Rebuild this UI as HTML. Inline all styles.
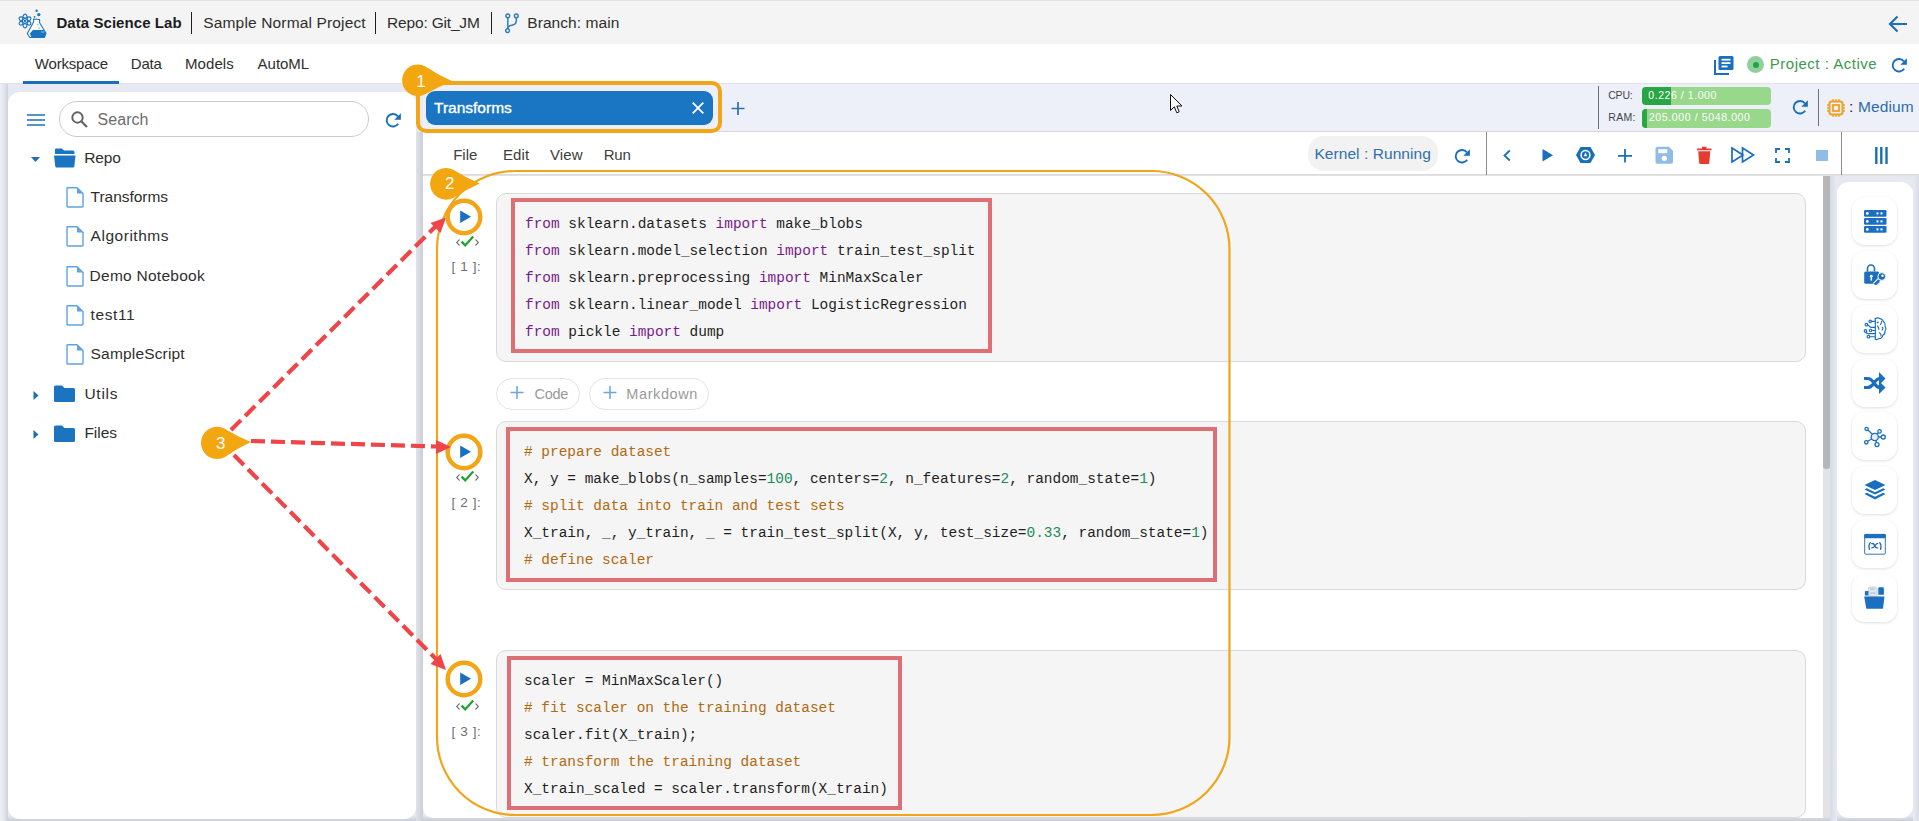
<!DOCTYPE html>
<html><head><meta charset="utf-8">
<style>
*{box-sizing:border-box;margin:0;padding:0}
html,body{width:1919px;height:821px;overflow:hidden;background:#e6e9f1;font-family:"Liberation Sans",sans-serif;color:#333}
.a{position:absolute}
.t{position:absolute;white-space:pre;line-height:1}
svg{position:absolute;overflow:visible}
#hdr{left:0;top:0;width:1919px;height:44px;background:#f4f4f4;border-top:1px solid #e4e4e4}
#nav{left:0;top:44px;width:1919px;height:40px;background:#fff;border-bottom:1px solid #dfe2ea}
#leftcard{left:8px;top:92px;width:408px;height:727px;background:#fff;border-radius:12px}
#gapstrip{left:416px;top:132px;width:7px;height:689px;background:linear-gradient(90deg,#dfe2e9,#cbced7)}
#leftshadow{left:0;top:84px;width:8px;height:737px;background:linear-gradient(90deg,#eef0f5,#e3e6ee 50%,#cdd0d9)}
#tabbar{left:423px;top:84px;width:1496px;height:48px;background:#edf0f8;border-bottom:1px solid #d6d8de}
#toolbar{left:423px;top:132px;width:1496px;height:43px;background:#fff}
#tbline{left:423px;top:174px;width:1496px;height:5px;background:linear-gradient(180deg,#d2d2d2,rgba(230,230,230,.5) 40%,rgba(255,255,255,0))}
#nb{left:423px;top:176px;width:1407px;height:642px;background:#fff;border-bottom-left-radius:10px}
#sbtrack{left:1823px;top:176px;width:7px;height:642px;background:#e2e2e2}
#sbthumb{left:1823px;top:176px;width:7px;height:293px;background:#b6b6b6;border-radius:0 0 3px 3px}
#sidebar{left:1837px;top:182px;width:76px;height:636px;background:#fff;border-radius:12px}
.code{position:absolute;font-family:"Liberation Mono",monospace;font-size:14.45px;line-height:27px;white-space:pre;color:#1e1e1e}
.kw{color:#751b8b}
.cm{color:#b06a10}
.nu{color:#1a8a5c}
.cell{position:absolute;left:496px;width:1310px;background:#f5f5f5;border:1px solid #d9d9d9;border-radius:10px}
.redbox{position:absolute;border:4px solid #de6f74}
.sbtn{position:absolute;left:1852px;width:45px;height:48px;background:#fff;border-radius:13px;box-shadow:0 1px 3px rgba(0,0,0,.13)}
.pill{position:absolute;height:32px;border:1px solid #e3e3e3;border-radius:16px;background:#fff}
</style></head><body>

<svg width="0" height="0" style="position:absolute"><defs><symbol id="refr" viewBox="0 0 18 17"><path d="M14.2 11.8 A6.3 6.3 0 1 1 13.9 4.3" fill="none" stroke="#1a6fb8" stroke-width="1.9"/><path d="M16.9 1.2 V7.7 H10.3 Z" fill="#1a6fb8"/></symbol></defs></svg>
<div id="hdr" class="a"></div>
<div id="nav" class="a"></div>
<div class="a" style="left:0;top:816px;width:1919px;height:5px;background:linear-gradient(180deg,#e3e6ed,#c9ccd4)"></div>
<div id="leftshadow" class="a"></div>
<div id="leftcard" class="a"></div>
<div id="gapstrip" class="a"></div>
<div id="tabbar" class="a"></div>
<div id="toolbar" class="a"></div>
<div id="tbline" class="a"></div>
<div id="nb" class="a"></div>
<div id="sbtrack" class="a"></div>
<div id="sbthumb" class="a"></div>
<div class="a" style="left:1830px;top:176px;width:7px;height:645px;background:linear-gradient(90deg,#d6dae4,#e8ebf3)"></div>
<div class="a" style="left:1913px;top:176px;width:6px;height:645px;background:linear-gradient(90deg,#e8ebf3,#d9dce5)"></div>
<div id="sidebar" class="a"></div>

<!-- ============ HEADER ============ -->
<!-- logo -->
<svg style="left:14px;top:6px" width="36" height="36" viewBox="14 6 36 36">
 <g fill="none" stroke="#1a74c0" stroke-width="1.1">
  <ellipse cx="25" cy="21" rx="6.9" ry="2.4" transform="rotate(90 25 21)"/>
  <ellipse cx="25" cy="21" rx="6.6" ry="2.4" transform="rotate(30 25 21)"/>
  <ellipse cx="25" cy="21" rx="6.6" ry="2.4" transform="rotate(-30 25 21)"/>
 </g>
 <circle cx="25" cy="21" r="1.2" fill="#1a74c0"/>
 <circle cx="36.6" cy="10.8" r="1.2" fill="#1a74c0"/>
 <circle cx="38.8" cy="14.6" r="1.7" fill="#1a74c0"/>
 <circle cx="34.6" cy="16.8" r="0.9" fill="#1a74c0"/>
 <path d="M33.6 19 L39.6 19.5 L39.6 22.8 L46 33.3 L44.3 37.5 L29.8 37.5 L27.3 33.5 L33.6 22 Z" fill="#fff" stroke="#1a74c0" stroke-width="1.1" stroke-linejoin="round"/>
 <path d="M33 29.9 L43.5 29.9 L46 33.3 L44.3 37.5 L31.5 37.5 L29.8 33.5 Z" fill="#1a74c0"/>
 <path d="M36.8 24.9 H38.6 M38.3 28.1 H40.3" stroke="#7aa7d0" stroke-width="0.9"/>
 <path d="M41 32 H44.3" stroke="#8ab8e0" stroke-width="1"/>
</svg>
<div class="t" id="t_dsl" style="left:56.40px;top:15.10px;font-size:15px;font-weight:700;color:#1d1d1d;letter-spacing:0.067px">Data Science Lab</div>
<div class="a" style="left:190.8px;top:12px;width:1.6px;height:22px;background:#1f1f1f"></div>
<div class="t" id="t_snp" style="left:203.30px;top:15.10px;font-size:15.5px;color:#2e2e2e;letter-spacing:0.150px">Sample Normal Project</div>
<div class="a" style="left:374.8px;top:12px;width:1.6px;height:22px;background:#1f1f1f"></div>
<div class="t" id="t_repo" style="left:387.10px;top:15.10px;font-size:15.5px;color:#2e2e2e;letter-spacing:-0.182px">Repo: Git_JM</div>
<div class="a" style="left:490.5px;top:12px;width:1.6px;height:22px;background:#1f1f1f"></div>
<svg style="left:504px;top:13px" width="16" height="21" viewBox="0 0 16 21">
 <g fill="none" stroke="#2a7bc0" stroke-width="1.45">
  <circle cx="3.8" cy="2.8" r="1.9"/><circle cx="12.3" cy="2.8" r="1.9"/><circle cx="3.6" cy="17.6" r="1.9"/>
  <path d="M3.8 4.7 V15.7 M12.3 4.7 V7.5 Q12.3 11.5 8 12.2 Q4 12.8 3.7 15.5"/>
 </g>
</svg>
<div class="t" id="t_branch" style="left:527.30px;top:15.10px;font-size:15.5px;color:#2e2e2e;letter-spacing:0.064px">Branch: main</div>
<svg style="left:1888px;top:15px" width="20" height="18" viewBox="0 0 20 18">
 <path d="M19 9 H2.5 M9.5 1.5 L2 9 L9.5 16.5" fill="none" stroke="#1f6fb5" stroke-width="2.2"/>
</svg>

<!-- ============ NAV ============ -->
<div class="t" id="t_ws" style="left:34.85px;top:55.80px;font-size:15px;color:#2e2e2e;letter-spacing:-0.194px">Workspace</div>
<div class="a" style="left:23px;top:81px;width:96px;height:3px;background:#1a6fb8"></div>
<div class="t" id="t_data" style="left:130.80px;top:55.80px;font-size:15px;color:#2e2e2e;letter-spacing:-0.200px">Data</div>
<div class="t" id="t_models" style="left:185.00px;top:55.80px;font-size:15px;color:#2e2e2e;letter-spacing:0.080px">Models</div>
<div class="t" id="t_automl" style="left:257.60px;top:55.80px;font-size:15px;color:#2e2e2e;letter-spacing:-0.020px">AutoML</div>

<!-- project status -->
<svg style="left:1714px;top:56px" width="20" height="19" viewBox="0 0 20 19">
 <rect x="4.5" y="0" width="15" height="14" rx="1.5" fill="#1a6fc0"/>
 <path d="M1 4 V18 H15" fill="none" stroke="#1a6fc0" stroke-width="2"/>
 <rect x="7.5" y="2.8" width="9" height="1.8" fill="#fff"/>
 <rect x="7.5" y="6.2" width="9" height="1.8" fill="#fff"/>
 <rect x="7.5" y="9.6" width="6" height="1.8" fill="#fff"/>
</svg>
<div class="a" style="left:1747px;top:56px;width:17px;height:17px;border-radius:50%;background:#8fd09c"></div>
<div class="a" style="left:1752.5px;top:61.5px;width:6px;height:6px;border-radius:50%;background:#25a244"></div>
<div class="t" id="t_proj" style="left:1769.80px;top:55.50px;font-size:15px;color:#3b9a4e;letter-spacing:0.507px">Project : Active</div>
<svg style="left:1889.5px;top:57px" width="18" height="17" viewBox="0 0 18 17"><use href="#refr"/></svg>

<!-- ============ LEFT PANEL ============ -->
<svg style="left:27px;top:114px" width="18" height="12" viewBox="0 0 18 12">
 <g stroke="#1f6fb5" stroke-width="1.7"><path d="M0 1 H18 M0 6 H18 M0 11 H18"/></g>
</svg>
<div class="a" style="left:59px;top:101px;width:310px;height:36px;border:1px solid #cbcbcb;border-radius:18px"></div>
<svg style="left:71px;top:111px" width="17" height="17" viewBox="0 0 17 17">
 <circle cx="6.5" cy="6.5" r="5.2" fill="none" stroke="#616161" stroke-width="1.9"/>
 <path d="M10.5 10.5 L16 16" stroke="#616161" stroke-width="2.2"/>
</svg>
<div class="t" id="t_search" style="left:97.50px;top:112.20px;font-size:16px;color:#6d6d6d;letter-spacing:0.060px">Search</div>
<svg style="left:384px;top:112px" width="18" height="17" viewBox="0 0 18 17"><use href="#refr"/></svg>

<!-- tree -->
<svg style="left:31px;top:157px" width="10" height="6" viewBox="0 0 10 6"><path d="M0 0 H9 L4.5 5 Z" fill="#1a6fb8"/></svg>
<svg style="left:54px;top:148px" width="22" height="20" viewBox="0 0 22 20">
 <path d="M1.5 0.5 H8 L10 2.5 H19 Q20.5 2.5 20.5 4 V6 H1 V2 Q1 0.5 1.5 0.5 Z" fill="#1a74c0"/>
 <path d="M0 7.5 H21.5 L20.3 18.5 Q20 19.5 19 19.5 H2.5 Q1.5 19.5 1.3 18.5 Z" fill="#1a74c0"/>
</svg>
<div class="t" id="t_repo2" style="left:84.20px;top:150.10px;font-size:15.5px;color:#2e2e2e;letter-spacing:-0.100px">Repo</div>

<svg style="left:66px;top:187px" width="18" height="21" viewBox="0 0 18 21" class="fileic"><path d="M1 1.5 Q1 0.8 1.7 0.8 H11 L17 6.5 V19.3 Q17 20 16.3 20 H1.7 Q1 20 1 19.3 Z" fill="#fff" stroke="#5fa3e0" stroke-width="1.4"/><path d="M11 0.8 V6.5 H17 Z" fill="#5fa3e0"/></svg>
<div class="t" id="t_f1" style="left:90.60px;top:189.00px;font-size:15.5px;color:#2e2e2e;letter-spacing:-0.033px">Transforms</div>
<svg style="left:66px;top:226px" width="18" height="21" viewBox="0 0 18 21"><path d="M1 1.5 Q1 0.8 1.7 0.8 H11 L17 6.5 V19.3 Q17 20 16.3 20 H1.7 Q1 20 1 19.3 Z" fill="#fff" stroke="#5fa3e0" stroke-width="1.4"/><path d="M11 0.8 V6.5 H17 Z" fill="#5fa3e0"/></svg>
<div class="t" id="t_f2" style="left:90.60px;top:227.90px;font-size:15.5px;color:#2e2e2e;letter-spacing:0.522px">Algorithms</div>
<svg style="left:66px;top:266px" width="18" height="21" viewBox="0 0 18 21"><path d="M1 1.5 Q1 0.8 1.7 0.8 H11 L17 6.5 V19.3 Q17 20 16.3 20 H1.7 Q1 20 1 19.3 Z" fill="#fff" stroke="#5fa3e0" stroke-width="1.4"/><path d="M11 0.8 V6.5 H17 Z" fill="#5fa3e0"/></svg>
<div class="t" id="t_f3" style="left:89.60px;top:268.00px;font-size:15.5px;color:#2e2e2e;letter-spacing:0.258px">Demo Notebook</div>
<svg style="left:66px;top:305px" width="18" height="21" viewBox="0 0 18 21"><path d="M1 1.5 Q1 0.8 1.7 0.8 H11 L17 6.5 V19.3 Q17 20 16.3 20 H1.7 Q1 20 1 19.3 Z" fill="#fff" stroke="#5fa3e0" stroke-width="1.4"/><path d="M11 0.8 V6.5 H17 Z" fill="#5fa3e0"/></svg>
<div class="t" id="t_f4" style="left:90.60px;top:307.00px;font-size:15.5px;color:#2e2e2e;letter-spacing:0.580px">test11</div>
<svg style="left:66px;top:344px" width="18" height="21" viewBox="0 0 18 21"><path d="M1 1.5 Q1 0.8 1.7 0.8 H11 L17 6.5 V19.3 Q17 20 16.3 20 H1.7 Q1 20 1 19.3 Z" fill="#fff" stroke="#5fa3e0" stroke-width="1.4"/><path d="M11 0.8 V6.5 H17 Z" fill="#5fa3e0"/></svg>
<div class="t" id="t_f5" style="left:90.60px;top:346.40px;font-size:15.5px;color:#2e2e2e;letter-spacing:0.173px">SampleScript</div>

<svg style="left:33px;top:391px" width="6" height="10" viewBox="0 0 6 10"><path d="M0.5 0 V9 L5.5 4.5 Z" fill="#1a6fb8"/></svg>
<svg style="left:54px;top:385px" width="22" height="18" viewBox="0 0 22 18">
 <path d="M0 2 Q0 0.5 1.5 0.5 H8 L10.5 3 H19.5 Q21 3 21 4.5 V15.5 Q21 17 19.5 17 H1.5 Q0 17 0 15.5 Z" fill="#1a74c0"/>
</svg>
<div class="t" id="t_utils" style="left:84.40px;top:386.00px;font-size:15.5px;color:#2e2e2e;letter-spacing:0.750px">Utils</div>
<svg style="left:33px;top:430px" width="6" height="10" viewBox="0 0 6 10"><path d="M0.5 0 V9 L5.5 4.5 Z" fill="#1a6fb8"/></svg>
<svg style="left:54px;top:425px" width="22" height="18" viewBox="0 0 22 18">
 <path d="M0 2 Q0 0.5 1.5 0.5 H8 L10.5 3 H19.5 Q21 3 21 4.5 V15.5 Q21 17 19.5 17 H1.5 Q0 17 0 15.5 Z" fill="#1a74c0"/>
</svg>
<div class="t" id="t_files" style="left:84.40px;top:424.70px;font-size:15.5px;color:#2e2e2e;letter-spacing:0.000px">Files</div>

<!-- ============ TAB BAR ============ -->
<div class="a" style="left:426px;top:91px;width:287px;height:34px;background:#1a76c2;border-radius:9px"></div>
<div class="t" id="t_tab" style="left:434.00px;top:100.00px;font-size:15.5px;color:#fff;letter-spacing:0.000px;-webkit-text-stroke:0.35px #fff">Transforms</div>
<svg style="left:692px;top:102px" width="12" height="12" viewBox="0 0 12 12"><path d="M0.7 0.7 L11.3 11.3 M11.3 0.7 L0.7 11.3" stroke="#fff" stroke-width="1.8"/></svg>
<svg style="left:731px;top:102px" width="14" height="14" viewBox="0 0 14 14"><path d="M7 0 V13 M0.5 6.5 H13.5" stroke="#2a6fb2" stroke-width="1.7"/></svg>

<!-- cpu/ram -->
<div class="a" style="left:1598px;top:86px;width:1px;height:43px;background:#707070"></div>
<div class="t" id="t_cpu" style="left:1608.20px;top:89.70px;font-size:10.5px;color:#444;letter-spacing:-0.167px">CPU:</div>
<div class="t" id="t_ram" style="left:1608.20px;top:111.75px;font-size:10.5px;color:#444;letter-spacing:0.367px">RAM:</div>
<div class="a" style="left:1642px;top:87px;width:129px;height:18px;background:#97d88b;border-radius:4px;overflow:hidden"><div class="a" style="left:0;top:0;width:29px;height:18px;background:#27a643"></div></div>
<div class="a" style="left:1642px;top:109px;width:129px;height:19px;background:#97d88b;border-radius:4px;overflow:hidden"><div class="a" style="left:0;top:0;width:5px;height:19px;background:#27a643"></div></div>
<div class="t" id="t_cpuv" style="left:1648.30px;top:89.70px;font-size:10.5px;color:#fff;letter-spacing:0.558px">0.226 / 1.000</div>
<div class="t" id="t_ramv" style="left:1648.90px;top:111.75px;font-size:10.5px;color:#fff;letter-spacing:0.618px">205.000 / 5048.000</div>
<svg style="left:1791.3px;top:99px" width="18" height="17" viewBox="0 0 18 17"><use href="#refr"/></svg>
<div class="a" style="left:1818px;top:89px;width:1px;height:37px;background:#707070"></div>
<svg style="left:1827px;top:99px" width="18" height="18" viewBox="0 0 18 18">
 <rect x="2.5" y="2.5" width="13" height="13" rx="2" fill="none" stroke="#f0a020" stroke-width="2"/>
 <rect x="6" y="6" width="6" height="6" fill="none" stroke="#f0a020" stroke-width="1.8"/>
 <g stroke="#f0a020" stroke-width="1.3"><path d="M6 0 V2 M9 0 V2 M12 0 V2 M6 16 V18 M9 16 V18 M12 16 V18 M0 6 H2 M0 9 H2 M0 12 H2 M16 6 H18 M16 9 H18 M16 12 H18"/></g>
</svg>
<div class="t" id="t_med" style="left:1849.00px;top:98.70px;font-size:15.5px;color:#2d6caa;letter-spacing:0.143px"><span style="color:#222">:</span> Medium</div>

<!-- ============ TOOLBAR ============ -->
<div class="t" id="t_file" style="left:453.20px;top:146.90px;font-size:15px;color:#3d3d3d;letter-spacing:0.000px">File</div>
<div class="t" id="t_edit" style="left:503.00px;top:146.90px;font-size:15px;color:#3d3d3d;letter-spacing:0.067px">Edit</div>
<div class="t" id="t_view" style="left:550.00px;top:146.90px;font-size:15px;color:#3d3d3d;letter-spacing:0.100px">View</div>
<div class="t" id="t_run" style="left:603.70px;top:146.90px;font-size:15px;color:#3d3d3d;letter-spacing:-0.150px">Run</div>
<div class="a" style="left:1308px;top:136px;width:130px;height:35px;background:#f2f2f2;border-radius:16px"></div>
<div class="t" id="t_kernel" style="left:1314.40px;top:146.00px;font-size:15.5px;color:#2f6fae;letter-spacing:0.067px">Kernel : Running</div>
<svg style="left:1453px;top:148px" width="18" height="17" viewBox="0 0 18 17"><use href="#refr"/></svg>
<div class="a" style="left:1486px;top:132px;width:1px;height:43px;background:#8c8c8c"></div>
<svg style="left:1503px;top:150px" width="8" height="11" viewBox="0 0 8 11"><path d="M6.8 0.5 L1.5 5.5 L6.8 10.5" fill="none" stroke="#1a6fb8" stroke-width="1.8"/></svg>
<svg style="left:1542px;top:149px" width="12" height="13" viewBox="0 0 12 13"><path d="M0.5 0 L11 6.3 L0.5 12.6 Z" fill="#1a6fb8"/></svg>
<svg style="left:1576px;top:147px" width="19" height="16" viewBox="0 0 19 16">
 <path d="M4.5 0 H14.5 L19 8 L14.5 16 H4.5 L0 8 Z" fill="#1a6fb8"/>
 <circle cx="9.5" cy="8" r="4.4" fill="none" stroke="#fff" stroke-width="1.5"/>
 <path d="M9.5 5.5 L11.3 9.3 H7.7 Z" fill="#fff"/>
</svg>
<svg style="left:1618px;top:149px" width="14" height="14" viewBox="0 0 14 14"><path d="M7 0 V13.5 M0 6.8 H14" stroke="#1a6fb8" stroke-width="1.8"/></svg>
<svg style="left:1655px;top:146px" width="19" height="19" viewBox="0 0 19 19">
 <path d="M0.5 2.5 Q0.5 0.8 2.3 0.8 H14 L18 4.8 V16 Q18 17.8 16.3 17.8 H2.3 Q0.5 17.8 0.5 16 Z" fill="#90bde5"/>
 <rect x="3.3" y="3.2" width="9" height="4" fill="#fff"/>
 <circle cx="9.3" cy="12.3" r="2.6" fill="#fff"/>
</svg>
<svg style="left:1697px;top:146px" width="15" height="19" viewBox="0 0 15 19">
 <path d="M0 2.5 H14.5 V4.2 H0 Z M5 0.8 H9.5 V2.5 H5 Z" fill="#e63c30"/>
 <path d="M1.2 5.2 H13.3 L12.3 17 Q12.2 18 11.2 18 H3.3 Q2.3 18 2.2 17 Z" fill="#e63c30"/>
</svg>
<svg style="left:1731px;top:147px" width="24" height="16" viewBox="0 0 24 16">
 <path d="M1 1 L12 8 L1 15 Z M11.5 1 L22.5 8 L11.5 15 Z" fill="none" stroke="#1a6fb8" stroke-width="1.7" stroke-linejoin="miter"/>
</svg>
<svg style="left:1775px;top:148px" width="15" height="15" viewBox="0 0 15 15">
 <path d="M1 5 V1 H5 M10 1 H14 V5 M14 10 V14 H10 M5 14 H1 V10" fill="none" stroke="#1a6fb8" stroke-width="1.8"/>
</svg>
<div class="a" style="left:1816px;top:150px;width:12px;height:11px;background:#8fbde3"></div>
<div class="a" style="left:1841px;top:132px;width:1px;height:43px;background:#8c8c8c"></div>
<svg style="left:1875px;top:147px" width="13" height="17" viewBox="0 0 13 17"><path d="M1.3 0 V17 M6.3 0 V17 M11.5 0 V17" stroke="#1a6fb8" stroke-width="2.4"/></svg>

<!-- ============ SIDEBAR ============ -->
<div class="sbtn" style="top:197px"></div>
<div class="sbtn" style="top:251px"></div>
<div class="sbtn" style="top:305px"></div>
<div class="sbtn" style="top:359px"></div>
<div class="sbtn" style="top:412px"></div>
<div class="sbtn" style="top:466px"></div>
<div class="sbtn" style="top:520px"></div>
<div class="sbtn" style="top:574px"></div>


<!-- sidebar icons -->
<svg style="left:1864px;top:210px" width="23" height="23" viewBox="0 0 23 23">
 <g fill="#1a6fc0"><rect x="0" y="0" width="22.5" height="6.8" rx="1.3"/><rect x="0" y="8" width="22.5" height="6.8" rx="1.3"/><rect x="0" y="16" width="22.5" height="6.8" rx="1.3"/></g>
 <g fill="#fff"><circle cx="3.3" cy="3.4" r="1.4"/><circle cx="3.3" cy="11.4" r="1.4"/><circle cx="3.3" cy="19.4" r="1.4"/>
 <rect x="12.5" y="2.4" width="2" height="2"/><rect x="16.5" y="2.4" width="2" height="2"/>
 <rect x="12.5" y="10.4" width="2" height="2"/><rect x="16.5" y="10.4" width="2" height="2"/>
 <rect x="12.5" y="18.4" width="2" height="2"/><rect x="16.5" y="18.4" width="2" height="2"/></g>
</svg>
<svg style="left:1864px;top:263px" width="22" height="23" viewBox="0 0 22 23">
 <path d="M3.5 8.5 V5.5 A3.5 3.5 0 0 1 10.5 5.5 V8.5" fill="none" stroke="#1a6fc0" stroke-width="1.6"/>
 <rect x="0.2" y="8.5" width="15" height="12.3" rx="1.6" fill="#1a6fc0"/>
 <circle cx="7.3" cy="13.2" r="1.4" fill="#fff"/><path d="M7.3 13.5 V17.6" stroke="#fff" stroke-width="1.5"/>
 <path d="M10.5 21.5 L16.5 15.5" stroke="#fff" stroke-width="4.2"/>
 <path d="M10.5 21.5 L16.5 15.5 M12 20 L13.5 21.3 M13.8 18.2 L15.3 19.5" stroke="#1a6fc0" stroke-width="1.9"/>
 <circle cx="17.8" cy="13.5" r="3.9" fill="#1a6fc0" stroke="#fff" stroke-width="1"/>
 <circle cx="18.5" cy="12.8" r="1.2" fill="#fff"/>
</svg>
<svg style="left:1860px;top:313px" width="30" height="30" viewBox="0 0 30 30">
 <g fill="none" stroke="#1a6fc0" stroke-width="1.15" stroke-linecap="round">
  <path d="M15.3 5.6 V26.2"/>
  <path d="M15.3 5.6 Q17.5 4.3 20 5.6 Q22.8 6 23.6 8.8 Q25.7 10.3 25.2 13.2 Q26.6 15.5 25 18 Q25.3 21 22.8 22.3 Q22 25.6 18.8 25.6 Q17 27.2 15.3 26.2"/>
  <path d="M17.2 9.8 L18.2 9 M17.5 13 Q19 14.5 18.8 16.2 M21.5 8.3 Q21.8 10.2 20.5 11.5 M22.2 14.2 Q23.6 15.5 22 17 M19.5 19.8 Q21.5 21 21 23"/>
  <path d="M11.2 8.4 H15.3 M7.5 12 Q9.5 12.8 10.5 14.3 H15.3 M11.8 17.5 H15.3 M5.8 19 Q6.4 20.6 8.2 20.6 H15.3 M9.6 23.7 H15.3"/>
  <circle cx="10.2" cy="8.4" r="1.25"/><circle cx="6.4" cy="11.7" r="1.3"/><circle cx="10.6" cy="17.5" r="1.25"/><circle cx="5.5" cy="17.9" r="1.3"/><circle cx="8.4" cy="23.7" r="1.3"/>
 </g>
</svg>
<svg style="left:1864px;top:371px" width="22" height="24" viewBox="0 0 22 24">
 <path d="M0 7.5 H3.5 Q7 7.5 10 12 Q13 16.5 16 16.5 H16.5 M0 16.5 H3.5 Q7 16.5 10 12 Q13 7.5 16 7.5 H16.5" fill="none" stroke="#1a6fc0" stroke-width="3.2"/>
 <path d="M15 1 L21.5 7.5 L15 14 Z M15 10 L21.5 16.5 L15 23 Z" fill="#1a6fc0"/>
</svg>
<svg style="left:1864px;top:427px" width="22" height="20" viewBox="0 0 22 20">
 <g stroke="#1a6fc0" stroke-width="1.3" fill="none">
  <path d="M11 10 L3.5 2.5 M11 10 L14.8 5.2 M11 10 L18.5 10 M11 10 L3.3 14.5 M11 10 L12.5 16"/>
 </g>
 <g stroke="#1a6fc0" stroke-width="1.3" fill="#e9eef6">
  <circle cx="10.8" cy="10" r="3.6"/>
 </g>
 <g stroke="#1a6fc0" stroke-width="1.3" fill="#fff">
  <circle cx="2.6" cy="1.9" r="1.6"/><circle cx="15.6" cy="4.4" r="1.7"/><circle cx="19.3" cy="10" r="2"/><circle cx="2.3" cy="15.3" r="1.7"/><circle cx="13" cy="17.6" r="2"/>
 </g>
</svg>
<svg style="left:1864px;top:480px" width="22" height="21" viewBox="0 0 22 21">
 <path d="M11 0 L21.5 5 L11 10 L0.5 5 Z" fill="#1a6fc0"/>
 <path d="M2.8 8.2 L11 12.3 L19.2 8.2 L21.5 9.5 L11 14.5 L0.5 9.5 Z" fill="#1a6fc0"/>
 <path d="M2.8 12.7 L11 16.8 L19.2 12.7 L21.5 14 L11 19.5 L0.5 14 Z" fill="#1a6fc0"/>
</svg>
<svg style="left:1860px;top:529px" width="30" height="30" viewBox="0 0 30 30">
 <rect x="4.7" y="5.4" width="20.6" height="19.8" rx="1" fill="none" stroke="#3a76b0" stroke-width="1"/>
 <path d="M4.2 6 Q4.2 4.9 5.3 4.9 H24.7 Q25.8 4.9 25.8 6 V9.3 H4.2 Z" fill="#1a6fc0"/>
 <g fill="none" stroke="#2a6aa8" stroke-width="1.3" stroke-linecap="round">
  <path d="M10.2 13.6 Q8.2 16.5 9.4 20.3"/>
  <path d="M19.8 13.6 Q21.8 16.5 20.6 20.3"/>
  <path d="M11.8 14.6 Q13.8 14.1 14.6 16.5 Q15.4 19.2 17.6 18.9"/>
  <path d="M17.8 14.4 Q16.3 14.6 15 16.8 Q13.8 19 11.8 18.9"/>
 </g>
</svg>
<svg style="left:1860px;top:582px" width="30" height="30" viewBox="0 0 30 30">
 <path d="M4.9 10 Q4.9 9.1 5.8 9.1 H9 V13.6 H4.9 Z" fill="#1a6fc0"/>
 <path d="M18.3 6.2 Q18.3 5.3 19.2 5.3 H23 Q23.9 5.3 23.9 6.2 V12.8 H18.3 Z" fill="#1a6fc0"/>
 <path d="M8.6 5 H15.5 L17.2 6.7 V14.6 H8.6 Z" fill="#dfe6ee" stroke="#b5c0cc" stroke-width="0.6"/>
 <path d="M10 7 H14.5 M10 11 H15.5" stroke="#9fb0c2" stroke-width="0.8"/>
 <path d="M4.2 14.5 H24.5 L23 26.3 Q22.9 26.8 22.3 26.8 H6.9 Q6.3 26.8 6.2 26.3 Z" fill="#1a6fc0"/>
</svg>

<!-- ============ CELLS ============ -->
<div class="cell" style="top:193px;height:169px"></div>
<div class="redbox" style="left:511px;top:198px;width:481px;height:155px"></div>
<div class="code" id="c1" style="left:525px;top:211px"><span class="kw">from</span> sklearn.datasets <span class="kw">import</span> make_blobs
<span class="kw">from</span> sklearn.model_selection <span class="kw">import</span> train_test_split
<span class="kw">from</span> sklearn.preprocessing <span class="kw">import</span> MinMaxScaler
<span class="kw">from</span> sklearn.linear_model <span class="kw">import</span> LogisticRegression
<span class="kw">from</span> pickle <span class="kw">import</span> dump</div>

<div class="pill" style="left:496px;top:378px;width:84px"></div>
<svg style="left:510px;top:386px" width="14" height="14" viewBox="0 0 14 14"><path d="M7 0 V13 M0.5 6.5 H13.5" stroke="#6ea6d8" stroke-width="1.5"/></svg>
<div class="t" id="t_code" style="left:534.60px;top:386.80px;font-size:14.5px;color:#9a9a9a;letter-spacing:-0.300px">Code</div>
<div class="pill" style="left:589px;top:378px;width:120px"></div>
<svg style="left:603px;top:386px" width="14" height="14" viewBox="0 0 14 14"><path d="M7 0 V13 M0.5 6.5 H13.5" stroke="#6ea6d8" stroke-width="1.5"/></svg>
<div class="t" id="t_md" style="left:626.30px;top:386.80px;font-size:14.5px;color:#9a9a9a;letter-spacing:0.600px">Markdown</div>

<div class="cell" style="top:421px;height:169px"></div>
<div class="redbox" style="left:506px;top:427px;width:711px;height:155px"></div>
<div class="code" id="c2" style="left:524px;top:439px"><span class="cm"># prepare dataset</span>
X, y = make_blobs(n_samples=<span class="nu">100</span>, centers=<span class="nu">2</span>, n_features=<span class="nu">2</span>, random_state=<span class="nu">1</span>)
<span class="cm"># split data into train and test sets</span>
X_train, _, y_train, _ = train_test_split(X, y, test_size=<span class="nu">0.33</span>, random_state=<span class="nu">1</span>)
<span class="cm"># define scaler</span></div>

<div class="cell" style="top:650px;height:168px"></div>
<div class="redbox" style="left:507px;top:656px;width:395px;height:154px"></div>
<div class="code" id="c3" style="left:524px;top:668px">scaler = MinMaxScaler()
<span class="cm"># fit scaler on the training dataset</span>
scaler.fit(X_train);
<span class="cm"># transform the training dataset</span>
X_train_scaled = scaler.transform(X_train)</div>

<!-- gutters -->
<div class="t" id="t_n1" style="left:451.5px;top:260.4px;font-size:13.5px;letter-spacing:0.6px;color:#6f6f6f">[ 1 ]:</div>
<div class="t" id="t_n2" style="left:451.5px;top:496px;font-size:13.5px;letter-spacing:0.6px;color:#6f6f6f">[ 2 ]:</div>
<div class="t" id="t_n3" style="left:451.5px;top:725px;font-size:13.5px;letter-spacing:0.6px;color:#6f6f6f">[ 3 ]:</div>


<!-- ============ RUN BUTTONS ============ -->
<svg style="left:445px;top:198px" width="38" height="38" viewBox="0 0 38 38" id="run1">
 <circle cx="19" cy="19" r="16.3" fill="#fff" stroke="#f2a516" stroke-width="4.5"/>
 <path d="M15.2 12.5 L26 18.8 L15.2 25 Z" fill="#1a6fc0"/>
</svg>
<svg style="left:445px;top:433px" width="38" height="38" viewBox="0 0 38 38">
 <circle cx="19" cy="19" r="16.3" fill="#fff" stroke="#f2a516" stroke-width="4.5"/>
 <path d="M15.2 12.5 L26 18.8 L15.2 25 Z" fill="#1a6fc0"/>
</svg>
<svg style="left:445px;top:660px" width="38" height="38" viewBox="0 0 38 38">
 <circle cx="19" cy="19" r="16.3" fill="#fff" stroke="#f2a516" stroke-width="4.5"/>
 <path d="M15.2 12.5 L26 18.8 L15.2 25 Z" fill="#1a6fc0"/>
</svg>
<svg style="left:456px;top:236px" width="23" height="11" viewBox="0 0 23 11">
 <path d="M3.5 3.5 L0.8 6.5 L3.5 9.5 M19.5 3.5 L22.2 6.5 L19.5 9.5" fill="none" stroke="#555" stroke-width="1.1"/>
 <path d="M5.6 5.6 L9.2 9.4 L17.2 0.6" fill="none" stroke="#1fa32d" stroke-width="2.3"/>
</svg>
<svg style="left:456px;top:471px" width="23" height="11" viewBox="0 0 23 11">
 <path d="M3.5 3.5 L0.8 6.5 L3.5 9.5 M19.5 3.5 L22.2 6.5 L19.5 9.5" fill="none" stroke="#555" stroke-width="1.1"/>
 <path d="M5.6 5.6 L9.2 9.4 L17.2 0.6" fill="none" stroke="#1fa32d" stroke-width="2.3"/>
</svg>
<svg style="left:456px;top:700px" width="23" height="11" viewBox="0 0 23 11">
 <path d="M3.5 3.5 L0.8 6.5 L3.5 9.5 M19.5 3.5 L22.2 6.5 L19.5 9.5" fill="none" stroke="#555" stroke-width="1.1"/>
 <path d="M5.6 5.6 L9.2 9.4 L17.2 0.6" fill="none" stroke="#1fa32d" stroke-width="2.3"/>
</svg>

<!-- ============ ANNOTATIONS ============ -->
<!-- tab highlight -->
<div class="a" style="left:416px;top:81px;width:306px;height:52px;border:4px solid #f2a516;border-radius:10px"></div>
<!-- big rounded rect -->
<svg style="left:0;top:0" width="1919" height="821" viewBox="0 0 1919 821">
 <rect x="437" y="171" width="792.5" height="644" rx="78" ry="78" fill="none" stroke="#f0a51a" stroke-width="2.2"/>
 <!-- dashed arrows -->
 <g stroke="#ef4548" stroke-width="4.2" stroke-dasharray="14 6" fill="none">
  <path d="M231 430 L436 226"/>
  <path d="M251 441 L436 446.5"/>
  <path d="M234 455 L437 660"/>
 </g>
 <g fill="#ef4548">
  <path d="M446 217.5 L430.5 223 L440.5 233 Z"/>
  <path d="M451 447 L436 440 L436 454 Z"/>
  <path d="M446 670 L430.5 664 L440.5 654 Z"/>
 </g>
 <!-- markers -->
 <g fill="#f2a60f">
  <path d="M452.5 81.3 Q438.3 75.0 425.4 66.4 A15.8 15.8 0 1 0 424.6 94.6 Q438.0 86.8 452.5 81.3 Z"/>
  <path d="M479.7 183.4 Q465.9 177.7 453.3 169.7 A15.9 15.9 0 1 0 453.7 197.7 Q466.1 189.4 479.7 183.4 Z"/>
  <path d="M250.9 442.0 Q237.0 436.4 224.3 428.5 A16.1 16.1 0 1 0 225.0 456.9 Q237.3 448.3 250.9 442.0 Z"/>
 </g>
</svg>
<div class="t" id="t_m1" style="left:416.3px;top:72.7px;font-size:17px;color:#fff">1</div>
<div class="t" id="t_m2" style="left:445.1px;top:175.2px;font-size:17px;color:#fff">2</div>
<div class="t" id="t_m3" style="left:216px;top:434.7px;font-size:17px;color:#fff">3</div>

<!-- cursor -->
<svg style="left:1170px;top:94px" width="13" height="20" viewBox="0 0 13 20">
 <path d="M0.5 0.5 V16.5 L4.3 12.8 L6.8 18.8 L9.2 17.8 L6.8 12 H12 Z" fill="#fff" stroke="#111" stroke-width="1"/>
</svg>

<!-- BOTTOM MASK / bottom strip -->
<div class="a" style="left:423px;top:818px;width:1407px;height:3px;background:linear-gradient(180deg,#d6d9e0,#c9ccd4)"></div>

</body></html>
